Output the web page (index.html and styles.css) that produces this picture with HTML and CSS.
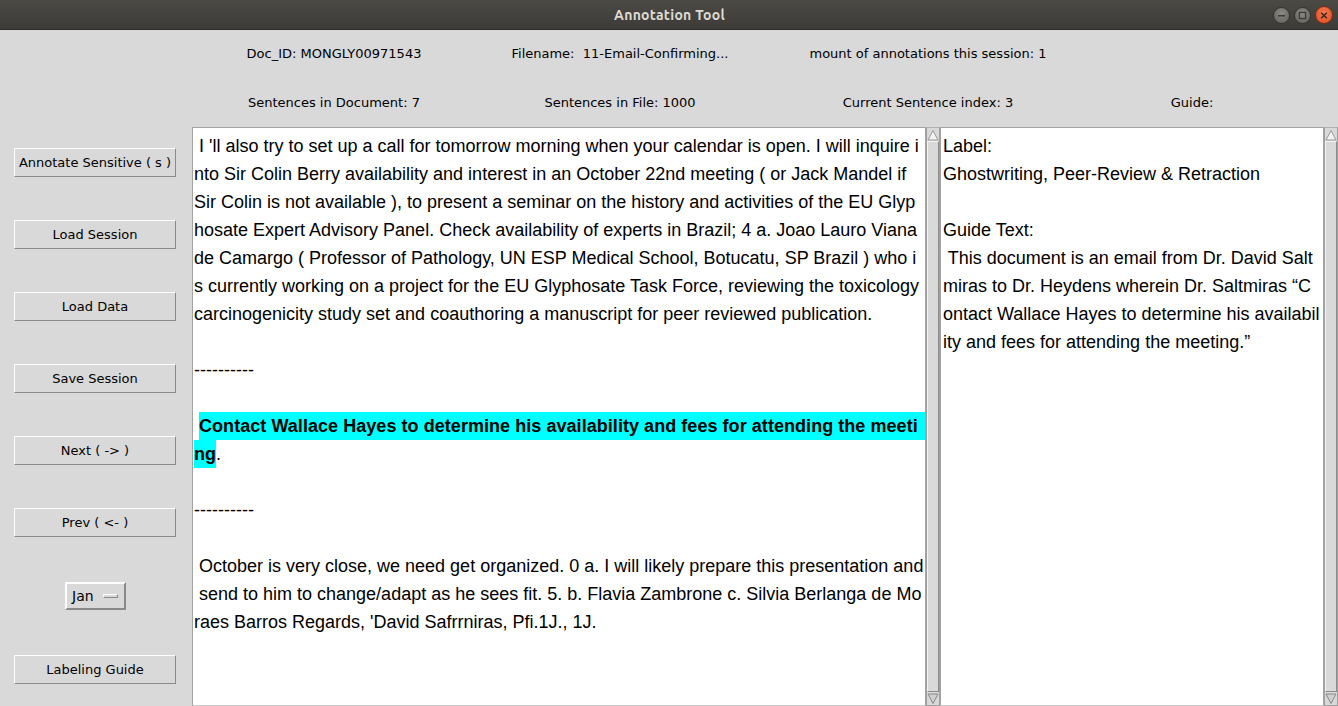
FILE: index.html
```html
<!DOCTYPE html>
<html>
<head>
<meta charset="utf-8">
<title>Annotation Tool</title>
<link rel="stylesheet" href="styles.css">
</head>
<body>
<div class="window">
  <div class="titlebar">
    <div class="tb-side"></div>
    <div class="tb-title">Annotation Tool</div>
    <div class="tb-side tb-controls">
      <span class="wbtn wmin"><svg width="17" height="17" viewBox="0 0 17 17"><rect x="4.5" y="8" width="8" height="1.6" fill="#3a3935"/></svg></span>
      <span class="wbtn wmax"><svg width="17" height="17" viewBox="0 0 17 17"><rect x="5" y="5" width="7" height="7" fill="none" stroke="#3a3935" stroke-width="1.4"/></svg></span>
      <span class="wbtn wclose"><svg width="17" height="17" viewBox="0 0 17 17"><path d="M5.5 5.5 L11.5 11.5 M11.5 5.5 L5.5 11.5" stroke="#3a2a22" stroke-width="1.6"/></svg></span>
    </div>
  </div>

  <div class="header">
    <div class="hcell">Doc_ID: MONGLY00971543</div>
    <div class="hcell">Filename:&nbsp; 11-Email-Confirming...</div>
    <div class="hcell">mount of annotations this session: 1</div>
    <div class="hcell"></div>
    <div class="hcell">Sentences in Document: 7</div>
    <div class="hcell">Sentences in File: 1000</div>
    <div class="hcell">Current Sentence index: 3</div>
    <div class="hcell">Guide:</div>
  </div>

  <div class="content">
    <div class="sidebar">
      <div class="btn">Annotate Sensitive ( s )</div>
      <div class="btn">Load Session</div>
      <div class="btn">Load Data</div>
      <div class="btn">Save Session</div>
      <div class="btn">Next ( -&gt; )</div>
      <div class="btn">Prev ( &lt;- )</div>
      <div class="menubtn"><span>Jan</span><span class="indicator"></span></div>
      <div class="btn btn-last">Labeling Guide</div>
    </div>

    <div class="textbox main-text">
      <div class="line"> I 'll also try to set up a call for tomorrow morning when your calendar is open. I will inquire i</div>
      <div class="line">nto Sir Colin Berry availability and interest in an October 22nd meeting ( or Jack Mandel if</div>
      <div class="line">Sir Colin is not available ), to present a seminar on the history and activities of the EU Glyp</div>
      <div class="line">hosate Expert Advisory Panel. Check availability of experts in Brazil; 4 a. Joao Lauro Viana</div>
      <div class="line">de Camargo ( Professor of Pathology, UN ESP Medical School, Botucatu, SP Brazil ) who i</div>
      <div class="line">s currently working on a project for the EU Glyphosate Task Force, reviewing the toxicology</div>
      <div class="line">carcinogenicity study set and coauthoring a manuscript for peer reviewed publication.</div>
      <div class="line"></div>
      <div class="line">----------</div>
      <div class="line"></div>
      <div class="line"> <span class="hl hl-wide">Contact Wallace Hayes to determine his availability and fees for attending the meeti</span></div>
      <div class="line"><span class="hl">ng</span>.</div>
      <div class="line"></div>
      <div class="line">----------</div>
      <div class="line"></div>
      <div class="line"> October is very close, we need get organized. 0 a. I will likely prepare this presentation and</div>
      <div class="line"> send to him to change/adapt as he sees fit. 5. b. Flavia Zambrone c. Silvia Berlanga de Mo</div>
      <div class="line">raes Barros Regards, 'David Safrrniras, Pfi.1J., 1J.</div>
    </div>
    <div class="scrollbar">
      <div class="arrow up"><svg width="12" height="12" viewBox="0 0 12 12"><path d="M6 1.5 L11 11 L1 11 Z" fill="#f2f2f2" stroke="#9a9a9a" stroke-width="1"/></svg></div>
      <div class="slider"></div>
      <div class="arrow down"><svg width="12" height="12" viewBox="0 0 12 12"><path d="M1 1 L11 1 L6 10.5 Z" fill="#d0d0d0" stroke="#8a8a8a" stroke-width="1"/></svg></div>
    </div>

    <div class="textbox guide-text">
      <div class="line">Label:</div>
      <div class="line">Ghostwriting, Peer-Review &amp; Retraction</div>
      <div class="line"></div>
      <div class="line">Guide Text:</div>
      <div class="line"> This document is an email from Dr. David Salt</div>
      <div class="line">miras to Dr. Heydens wherein Dr. Saltmiras “C</div>
      <div class="line">ontact Wallace Hayes to determine his availabil</div>
      <div class="line">ity and fees for attending the meeting.”</div>
    </div>
    <div class="scrollbar">
      <div class="arrow up"><svg width="12" height="12" viewBox="0 0 12 12"><path d="M6 1.5 L11 11 L1 11 Z" fill="#f2f2f2" stroke="#9a9a9a" stroke-width="1"/></svg></div>
      <div class="slider"></div>
      <div class="arrow down"><svg width="12" height="12" viewBox="0 0 12 12"><path d="M1 1 L11 1 L6 10.5 Z" fill="#d0d0d0" stroke="#8a8a8a" stroke-width="1"/></svg></div>
    </div>
  </div>
</div>
</body>
</html>
```
FILE: styles.css
```css
* { box-sizing: border-box; }
html, body {
  margin: 0;
  padding: 0;
  width: 1338px;
  height: 706px;
  overflow: hidden;
  background: #d9d9d9;
}
.window {
  width: 1338px;
  height: 706px;
  display: flex;
  flex-direction: column;
  background: #d9d9d9;
  font-family: "DejaVu Sans", sans-serif;
  font-size: 13px;
  color: #000;
}
.titlebar {
  height: 30px;
  flex: 0 0 30px;
  display: grid;
  grid-template-columns: 1fr auto 1fr;
  align-items: center;
  background: linear-gradient(#4b4a45, #3c3b37);
  border-bottom: 1px solid #2e2d2a;
}
.tb-title {
  color: #dfdbd2;
  font-family: "Ubuntu", "DejaVu Sans", sans-serif;
  font-weight: bold;
  font-size: 14px;
  letter-spacing: 0.3px;
  padding-left: 1px;
}
.tb-controls {
  display: flex;
  justify-content: flex-end;
  align-items: center;
  gap: 4px;
  padding-right: 5px;
  padding-top: 1px;
}
.wbtn {
  width: 17px;
  height: 17px;
  border-radius: 50%;
  display: flex;
  align-items: center;
  justify-content: center;
  background: radial-gradient(circle at 50% 35%, #8a8984, #5f5e5a);
  border: 1px solid #34332f;
}
.wbtn svg { display: block; }
.wclose {
  width: 18px;
  height: 18px;
  background: radial-gradient(circle at 50% 35%, #f47a4f, #e0491d);
  border-color: #7a2c12;
}
.header {
  display: grid;
  grid-template-columns: 192px 284px 288px 328px 200px;
  grid-template-rows: 46px 51px;
  flex: 0 0 97px;
}
.hcell {
  display: flex;
  align-items: center;
  justify-content: center;
  white-space: pre;
}
.hcell:nth-child(1), .hcell:nth-child(5) { grid-column: 2; }
.hcell:nth-child(n+5) { padding-top: 1px; }
.content {
  flex: 1;
  display: flex;
  min-height: 0;
}
.sidebar {
  width: 192px;
  flex: 0 0 192px;
  display: flex;
  flex-direction: column;
  align-items: center;
  padding-top: 21px;
  padding-right: 2px;
  gap: 43px;
}
.btn {
  width: 162px;
  height: 29px;
  display: flex;
  align-items: center;
  justify-content: center;
  background: #d9d9d9;
  border: 1px solid;
  border-color: #ffffff #8a8a8a #8a8a8a #ffffff;
  white-space: pre;
}
.menubtn {
  width: 61px;
  height: 28px;
  margin-top: 2px;
  margin-left: 1px;
  display: flex;
  align-items: center;
  padding-left: 5px;
  gap: 9px;
  border: 2px solid;
  border-color: #ffffff #8a8a8a #8a8a8a #ffffff;
  font-size: 14px;
}
.indicator {
  width: 15px;
  height: 4px;
  border: 1px solid;
  border-color: #ffffff #8a8a8a #8a8a8a #ffffff;
  background: #d9d9d9;
}
.btn-last { margin-top: 2px; }
.textbox {
  background: #ffffff;
  border: 1px solid #a3a3a3;
  border-bottom-color: #c8c8c8;
  height: 579px;
  padding: 4px 1px 3px;
  font-family: "Liberation Sans", Arial, sans-serif;
  font-size: 18px;
  color: #000;
  overflow: hidden;
}
.main-text { width: 734px; flex: 0 0 734px; }
.guide-text { width: 384px; flex: 0 0 384px; padding-left: 2px; }
.line {
  height: 28px;
  line-height: 28px;
  white-space: pre;
}
.hl {
  display: inline-block;
  height: 28px;
  line-height: 28px;
  background: #00ffff;
  font-weight: bold;
}
.hl-wide { padding-right: 9px; letter-spacing: 0.05px; }
.scrollbar {
  width: 14px;
  flex: 0 0 14px;
  height: 579px;
  display: flex;
  flex-direction: column;
  background: #c4c4c4;
  border: 1px solid #9f9f9f;
  border-top-color: #b0b0b0;
}
.arrow {
  height: 13px;
  flex: 0 0 13px;
  display: flex;
  align-items: center;
  justify-content: center;
  background: #d9d9d9;
}
.slider {
  flex: 1;
  background: #d9d9d9;
  border: 1px solid;
  border-color: #f4f4f4 #8c8c8c #8c8c8c #f4f4f4;
}
```
